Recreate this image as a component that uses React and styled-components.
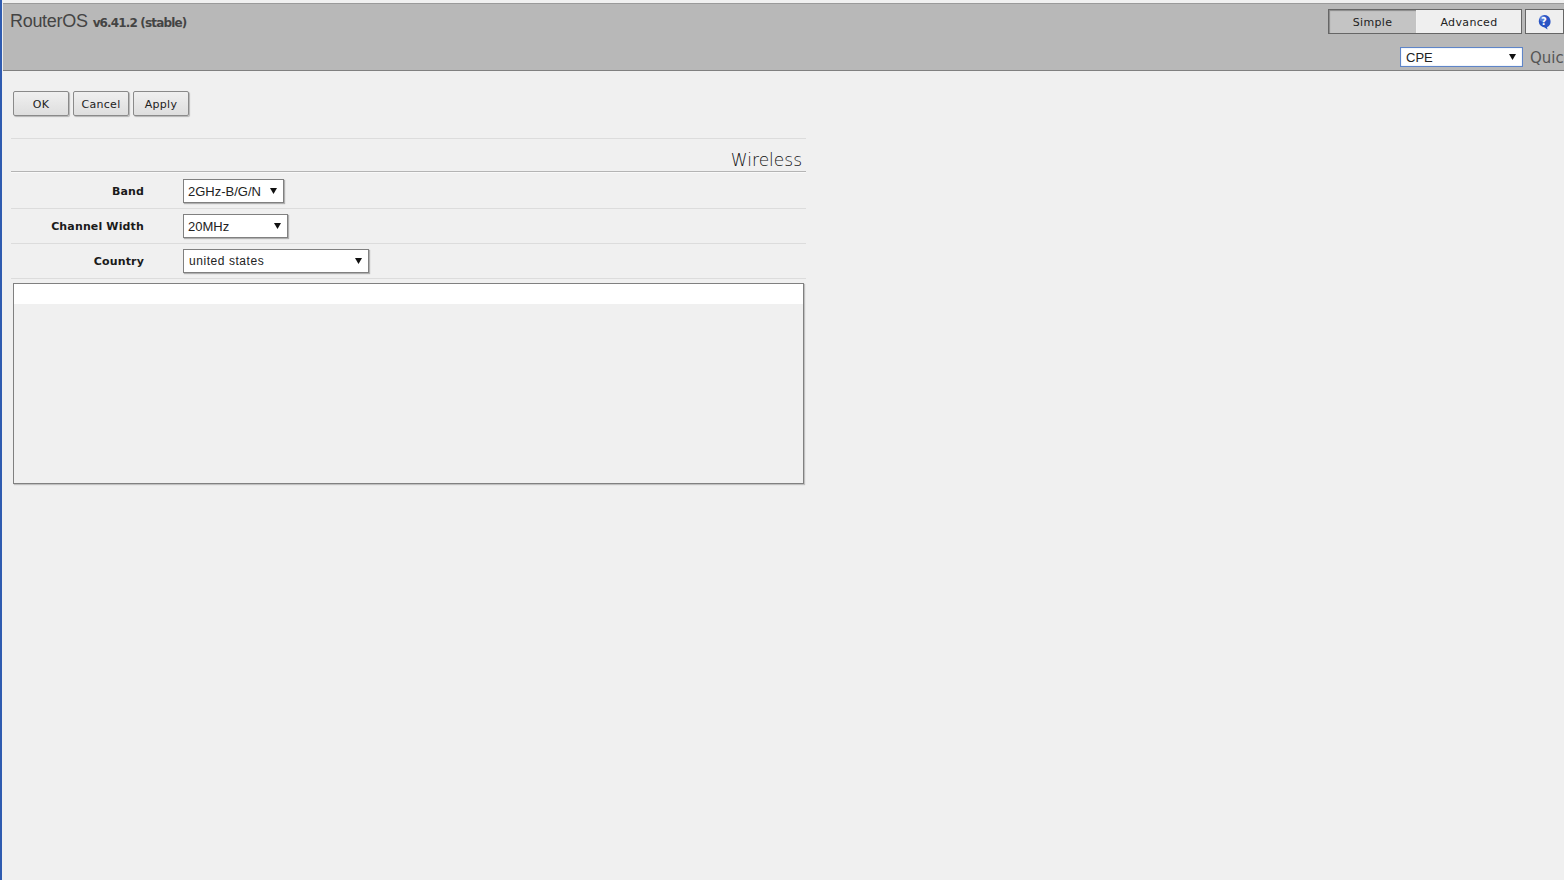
import React from "react";
import styled, { createGlobalStyle } from "styled-components";

const Global = createGlobalStyle`
  html, body { margin: 0; padding: 0; height: 100%; background: #f0f0f0; overflow: hidden; }
  #root { height: 100%; }
`;

const Shell = styled.div`
  display: flex;
  width: 1564px;
  height: 880px;
  background: #f0f0f0;
  font-family: "DejaVu Sans", Verdana, sans-serif;
  overflow: hidden;
`;
const Strip = styled.div`
  flex: none;
  width: 2px;
  height: 100%;
  background: #2f5bb0;
`;
const Page = styled.div`
  flex: 1;
  min-width: 0;
  padding-top: 3px;
  padding-left: 1px;
  display: flex;
  flex-direction: column;
`;
const Header = styled.header`
  height: 66px;
  flex: none;
  background: #b8b8b8;
  border-top: 1px solid #9a9a9a;
  border-bottom: 1px solid #808080;
  display: flex;
  justify-content: space-between;
  overflow: hidden;
`;
const Brand = styled.div`
  padding: 7px 0 0 7px;
  color: #444;
  font-family: "Liberation Sans", Arial, sans-serif;
  font-size: 18px;
  line-height: 20px;
  letter-spacing: -0.3px;
  white-space: nowrap;
`;
const Version = styled.span`
  font-family: "DejaVu Sans", Verdana, sans-serif;
  font-size: 12px;
  font-weight: 700;
  letter-spacing: -0.85px;
  margin-left: 5px;
`;
const HeaderRight = styled.div`
  width: 236px;
  display: flex;
  flex-direction: column;
  align-items: flex-end;
  padding-top: 5px;
`;
const TopControls = styled.div`
  display: flex;
  align-items: stretch;
  height: 25px;
`;
const Mode = styled.div`
  display: flex;
  border: 1px solid #666;
  box-sizing: border-box;
`;
const ModeTab = styled.div`
  width: ${(p) => p.$w}px;
  box-sizing: border-box;
  display: flex;
  align-items: center;
  justify-content: center;
  padding-top: 1px;
  font-size: 11px;
  letter-spacing: 0.35px;
  color: #222;
  background: ${(p) => (p.$active ? "#c4c4c4" : "#efefef")};
  border-right: ${(p) => (p.$active ? "1px solid #f2f2f2" : "0")};
  box-shadow: ${(p) => (p.$active ? "inset 1px 1px 1px #8a8a8a" : "none")};
`;
const HelpButton = styled.div`
  width: 39px;
  margin-left: 3px;
  box-sizing: border-box;
  border: 1px solid #666;
  background: #efefef;
  display: flex;
  align-items: center;
  justify-content: center;
  padding: 1px 1px 0 0;
`;
const BottomControls = styled.div`
  display: flex;
  align-items: center;
  margin-top: 13px;
  width: 164px;
  align-self: flex-end;
  overflow: hidden;
`;
const ProfileSelect = styled.div`
  flex: none;
  width: 123px;
  height: 20px;
  box-sizing: border-box;
  background: #fff;
  border: 1px solid #5f85c8;
  box-shadow: inset 0 0 1px #7d9fd8;
  display: flex;
  align-items: center;
  justify-content: space-between;
  padding: 0 6px 0 5px;
  font-family: "Liberation Sans", Arial, sans-serif;
  font-size: 13px;
  color: #222;
`;
const QuickLabel = styled.div`
  flex: none;
  margin-left: 7px;
  padding-top: 2px;
  font-size: 15px;
  color: #555;
  white-space: nowrap;
`;
const Content = styled.main`
  padding: 20px 0 0 8px;
  width: 795px;
`;
const ButtonBar = styled.div`
  display: flex;
  gap: 4px;
  padding-left: 2px;
`;
const Btn = styled.div`
  width: 56px;
  height: 25px;
  box-sizing: border-box;
  padding-top: 1px;
  border: 1px solid #8a8a8a;
  border-radius: 2px;
  background: linear-gradient(#f0f0f0, #dedede);
  box-shadow: 1px 1px 1px #b5b5b5;
  display: flex;
  align-items: center;
  justify-content: center;
  font-size: 11px;
  letter-spacing: 0.3px;
  color: #222;
`;
const SectionHead = styled.div`
  margin-top: 22px;
  height: 34px;
  box-sizing: border-box;
  border-top: 1px solid #dcdcdc;
  border-bottom: 1px solid #b4b4b4;
  display: flex;
  align-items: flex-end;
  justify-content: flex-end;
  padding: 0 4px 1px 0;
  font-size: 17px;
  font-weight: 200;
  line-height: 20px;
  color: #111;
`;
const Row = styled.div`
  height: ${(p) => (p.$first ? 37 : 35)}px;
  box-sizing: border-box;
  padding-top: ${(p) => (p.$first ? 1 : 0)}px;
  border-top: ${(p) => (p.$first ? "1px solid #f9f9f9" : "0")};
  border-bottom: 1px solid #dcdcdc;
  display: flex;
  align-items: center;
  gap: 39px;
`;
const Label = styled.div`
  width: 133px;
  text-align: right;
  font-size: 11px;
  font-weight: 700;
  letter-spacing: 0.15px;
  color: #1a1a1a;
`;
const Select = styled.div`
  width: ${(p) => p.$w}px;
  height: 24px;
  box-sizing: border-box;
  background: #fff;
  border: 1px solid #808080;
  box-shadow: 1px 1px 1px #b0b0b0;
  display: flex;
  align-items: center;
  justify-content: space-between;
  padding: 0 6px 0 ${(p) => p.$pl || 4}px;
  font-family: "Liberation Sans", Arial, sans-serif;
  font-size: ${(p) => p.$fs || 13}px;
  letter-spacing: ${(p) => p.$ls || "0"};
  color: #222;
`;
const Arrow = styled.svg`
  flex: none;
  width: 7px;
  height: 6px;
  fill: #111;
`;
const Panel = styled.div`
  margin: 4px 0 0 2px;
  width: 791px;
  height: 201px;
  box-sizing: border-box;
  border: 1px solid #808080;
  box-shadow: 1px 1px 1px #c0c0c0;
  background: #f0f0f0;
`;
const PanelTop = styled.div`
  height: 20px;
  background: #fff;
`;

const Tri = () => (
  <Arrow viewBox="0 0 7 6"><path d="M0 0h7L3.5 6z" /></Arrow>
);

const HelpIcon = () => (
  <svg width="16" height="16" viewBox="0 0 16 16">
    <path d="M8 1a6.5 6.5 0 0 1 3 12.3L11.5 15.5 8.6 13.5A6.3 6.3 0 0 1 8 1z" fill="#2a55c4" />
    <circle cx="6.5" cy="4.5" r="3" fill="#7e9be6" opacity="0.6" />
    <text x="8" y="11" textAnchor="middle" fontSize="10" fontWeight="700" fontFamily="DejaVu Sans" fill="#fff">?</text>
  </svg>
);

const fields = [
  { label: "Band", value: "2GHz-B/G/N", w: 101 },
  { label: "Channel Width", value: "20MHz", w: 105 },
  { label: "Country", value: "united states", w: 186, fs: 12, ls: "0.55px", pl: 5 },
];

export default function App() {
  return (
    <Shell>
      <Global />
      <Strip />
      <Page>
        <Header>
          <Brand>RouterOS<Version>v6.41.2 (stable)</Version></Brand>
          <HeaderRight>
            <TopControls>
              <Mode>
                <ModeTab $w={88} $active>Simple</ModeTab>
                <ModeTab $w={104}>Advanced</ModeTab>
              </Mode>
              <HelpButton><HelpIcon /></HelpButton>
            </TopControls>
            <BottomControls>
              <ProfileSelect>CPE<Tri /></ProfileSelect>
              <QuickLabel>Quick Set</QuickLabel>
            </BottomControls>
          </HeaderRight>
        </Header>
        <Content>
          <ButtonBar>
            <Btn>OK</Btn>
            <Btn>Cancel</Btn>
            <Btn>Apply</Btn>
          </ButtonBar>
          <SectionHead>Wireless</SectionHead>
          {fields.map((f, i) => (
            <Row key={f.label} $first={i === 0}>
              <Label>{f.label}</Label>
              <Select $w={f.w} $fs={f.fs} $ls={f.ls} $pl={f.pl}>{f.value}<Tri /></Select>
            </Row>
          ))}
          <Panel><PanelTop /></Panel>
        </Content>
      </Page>
    </Shell>
  );
}
